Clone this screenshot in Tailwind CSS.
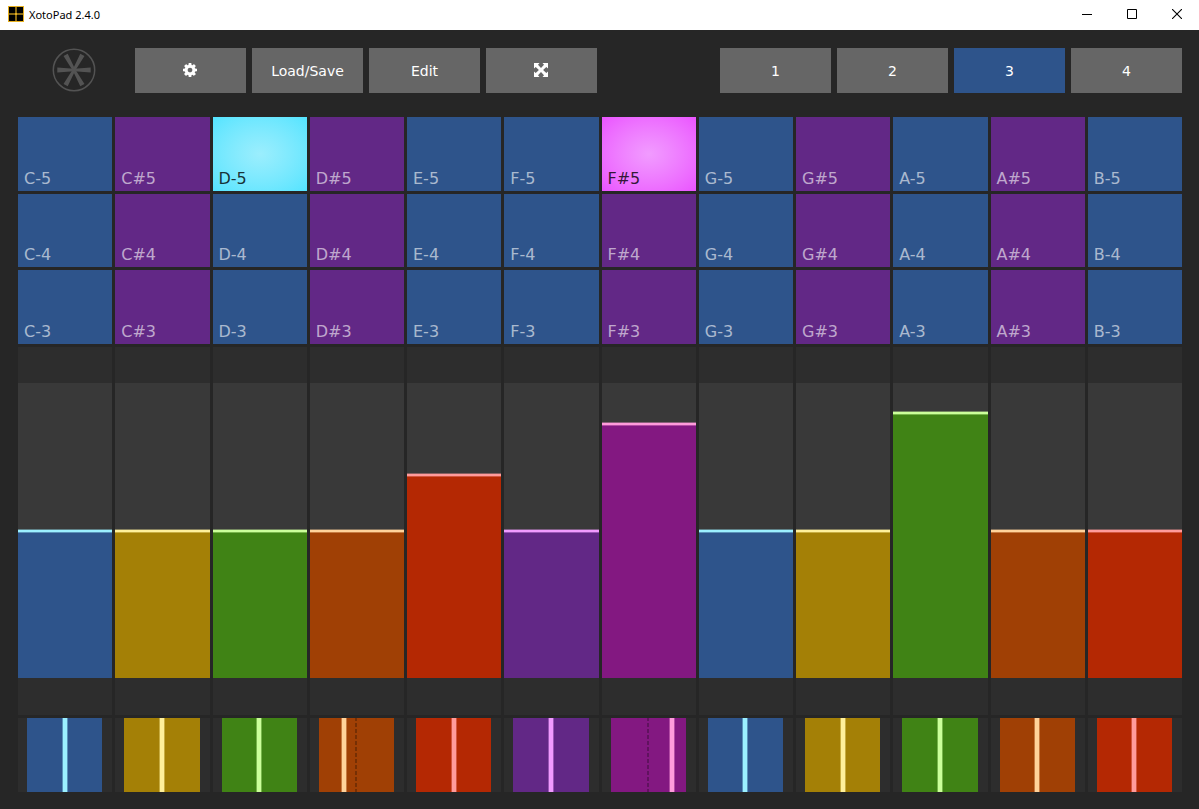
<!DOCTYPE html>
<html lang="en">
<head>
<meta charset="utf-8">
<meta name="viewport" content="width=device-width, initial-scale=1">
<title>XotoPad 2.4.0</title>
<script src="https://cdn.jsdelivr.net/npm/@tailwindcss/browser@4"></script>
</head>
<body class="flex min-h-screen flex-col bg-[#262626] font-['DejaVu_Sans',sans-serif] text-white">

<header class="flex h-[30px] shrink-0 items-center justify-between bg-white text-black">
  <div class="flex items-center gap-[5px] pb-0.5 pl-2">
    <svg class="size-4" viewBox="0 0 16 16" aria-hidden="true"><path fill="#e6b021" d="M0 0h16v16H0z"/><path fill="#000" d="M1 1h6v6H1zM9 1h6v6H9zM1 9h6v6H1zM9 9h6v6H9z"/><path fill="#8a6a14" d="M7 1h2v6H7zM7 9h2v6H7zM1 7h6v2H1zM9 7h6v2H9z"/></svg>
    <h1 class="pt-0.5 font-['Noto_Sans',sans-serif] text-[11px] leading-4">XotoPad 2.4.0</h1>
  </div>
  <div class="flex pb-0.5">
    <button class="flex h-7 w-[45px] items-center justify-center" aria-label="Minimize"><svg class="size-[10px]" viewBox="0 0 10 10"><path fill="#000" d="M0 5h10v1H0z"/></svg></button>
    <button class="flex h-7 w-[45px] items-center justify-center" aria-label="Maximize"><svg class="size-[10px]" viewBox="0 0 10 10"><path fill="none" stroke="#000" d="M.5.5h9v9h-9z"/></svg></button>
    <button class="flex h-7 w-[45px] items-center justify-center" aria-label="Close"><svg class="size-[10px]" viewBox="0 0 10 10"><path fill="none" stroke="#000" stroke-width="1.1" d="M0 0l10 10M10 0L0 10"/></svg></button>
  </div>
</header>

<main class="flex flex-1 flex-col gap-6 pt-[18px] pr-[17px] pb-[17px] pl-[18px]">
  <nav class="grid grid-cols-10 gap-1.5 text-[14px]" aria-label="Toolbar">
    <div class="flex h-[45px] items-center justify-center pb-px">
      <svg class="size-11" viewBox="0 0 44 44" fill="#535353" aria-hidden="true">
        <circle cx="22" cy="22" r="20.7" fill="none" stroke="#535353" stroke-width="1.5"/>
        <path d="M5.300 19.600L22 20.700L38.700 19.600V24.400L22 23.300L5.300 24.400z"/>
        <path transform="rotate(61 22 22)" d="M4.700 19.600L22 20.700L39.300 19.600V24.400L22 23.300L4.700 24.400z"/>
        <path transform="rotate(119 22 22)" d="M4.700 19.600L22 20.700L39.300 19.600V24.400L22 23.300L4.700 24.400z"/>
      </svg>
    </div>
    <button class="flex h-[45px] items-center justify-center bg-[#666] pr-0.5 pb-0.5" aria-label="Settings"><svg class="size-3.5" viewBox="0 0 1536 1536"><path fill="#fff" d="M1024 768q0-106-75-181t-181-75-181 75-75 181 75 181 181 75 181-75 75-181zm512-109v222q0 12-8 23t-20 13l-185 28q-19 54-39 91 35 50 107 138 10 12 10 25t-9 23q-27 37-99 108t-94 71q-12 0-26-9l-138-108q-44 23-91 38-16 136-29 186-7 28-36 28H657q-14 0-24.500-8.500T621 1506l-28-184q-49-16-90-37l-141 107q-10 9-25 9-14 0-25-11-126-114-165-168-7-10-7-23 0-12 8-23 15-21 51-66.500t54-70.500q-27-50-41-99L29 913q-13-2-21-12.500T0 877V655q0-12 8-23t19-13l186-28q14-46 39-92-40-57-107-138-10-12-10-24 0-10 9-23 26-36 98.500-107.500T337 135q13 0 26 10l138 107q44-23 91-38 16-136 29-186 7-28 36-28h222q14 0 24.500 8.500T915 30l28 184q49 16 90 37l142-107q9-9 24-9 13 0 25 10 129 119 165 170 7 8 7 22 0 12-8 23-15 21-51 66.500t-54 70.500q26 50 41 98l183 28q13 2 21 12.500t8 23.500z"/></svg></button>
    <button class="h-[45px] bg-[#666] pt-0.5">Load/Save</button>
    <button class="h-[45px] bg-[#666] pt-0.5">Edit</button>
    <button class="flex h-[45px] items-center justify-center bg-[#666] pr-0.5 pb-0.5" aria-label="Full screen"><svg class="size-3.5" viewBox="0 0 14 14"><path fill="#fff" d="M0 0h5.500L4 1.700 7 4.900 10 1.700 8.500 0H14v5.500L12.300 4 9.100 7l3.200 3L14 8.500V14H8.500L10 12.300 7 9.100 4 12.300 5.500 14H0V8.500L1.700 10 4.900 7 1.700 4 0 5.500z"/></svg></button>
    <button class="col-start-7 h-[45px] bg-[#666] pt-0.5">1</button>
    <button class="h-[45px] bg-[#666] pt-0.5">2</button>
    <button class="h-[45px] bg-[#2e548b] pt-0.5" aria-current="page">3</button>
    <button class="h-[45px] bg-[#666] pt-0.5">4</button>
  </nav>

  <section id="board" class="grid flex-1 grid-cols-12 grid-rows-[1fr_1fr_1fr_5fr_1fr] gap-[3px]" aria-label="Pads and controls"></section>
</main>

<script>
const board = document.getElementById('board');
const notes = ['C-', 'C#', 'D-', 'D#', 'E-', 'F-', 'F#', 'G-', 'G#', 'A-', 'A#', 'B-'];
const lit = {
  'D-5': 'bg-radial from-[#9beefd] to-[#53e4ff] text-black/80',
  'F#5': 'bg-radial from-[#f19bff] to-[#ea53ff] text-black/80'
};
const colors = {
  blue: ['bg-[#2e548b]', 'bg-[#9bf0ff] border-[#9bf0ff]/40'],
  yellow: ['bg-[#a48006]', 'bg-[#fff09b] border-[#fff09b]/40'],
  green: ['bg-[#408315]', 'bg-[#ccff9b] border-[#ccff9b]/40'],
  orange: ['bg-[#a04005]', 'bg-[#ffd39b] border-[#ffd39b]/40'],
  red: ['bg-[#b42803]', 'bg-[#ff9b9b] border-[#ff9b9b]/40'],
  purple: ['bg-[#622886]', 'bg-[#f19bff] border-[#f19bff]/40'],
  magenta: ['bg-[#831881]', 'bg-[#ff9bdc] border-[#ff9bdc]/40']
};
const strips = [
  ['blue', 50, 50], ['yellow', 50, 50], ['green', 50, 50], ['orange', 50, 33],
  ['red', 69, 50], ['purple', 50, 50], ['magenta', 86, 82], ['blue', 50, 50],
  ['yellow', 50, 50], ['green', 90, 50], ['orange', 50, 50], ['red', 50, 50]
];
let html = '';
for (const octave of [5, 4, 3]) {
  for (const n of notes) {
    const name = n + octave;
    const look = lit[name] || (n[1] === '#' ? 'bg-[#622886] text-white/60' : 'bg-[#2e548b] text-white/60');
    html += `<button class="flex items-end px-1.5 pb-px text-[16px] leading-[22px] ${look}">${name}</button>`;
  }
}
strips.forEach(([c, level], i) => {
  html += `<div class="flex bg-[#2d2d2d] pt-9 pb-[37px]">
    <div class="relative flex flex-1 flex-col justify-end bg-[#393939]">
      <div class="relative ${colors[c][0]}" style="height:${level}%"><div class="absolute inset-x-0 -top-0.5 h-1 border-y bg-clip-padding ${colors[c][1]}"></div></div>
      <input type="range" class="absolute inset-0 size-full opacity-0 [direction:rtl] [writing-mode:vertical-lr]" aria-label="Fader ${i + 1}" value="${level}">
    </div></div>`;
});
strips.forEach(([c, , pos], i) => {
  const dash = pos === 50 ? '' : '<div class="absolute inset-y-0 left-1/2 -ml-px w-0.5 bg-[repeating-linear-gradient(to_bottom,#0004_0_3px,transparent_3px_5px,#0004_5px_6px)]"></div>';
  html += `<div class="flex bg-[#2d2d2d] pr-2.5 pl-[9px]">
    <div class="relative flex-1 ${colors[c][0]}">${dash}
      <div class="absolute inset-y-0 -ml-[3px] w-1.5 border-x bg-clip-padding ${colors[c][1]}" style="left:${pos}%"></div>
      <input type="range" class="absolute inset-0 size-full opacity-0" aria-label="Bender ${i + 1}" value="${pos}">
    </div></div>`;
});
board.innerHTML = html;
</script>
</body>
</html>
